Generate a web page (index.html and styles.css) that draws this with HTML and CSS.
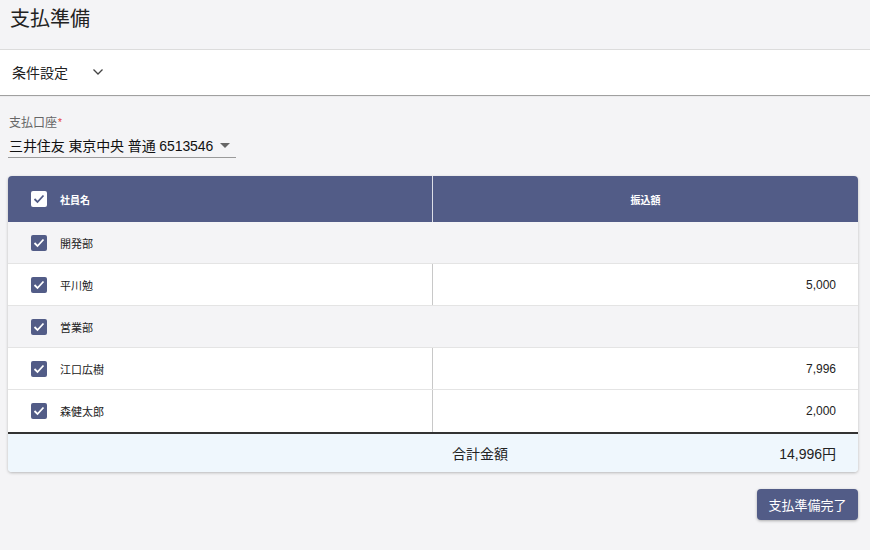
FILE: index.html
```html
<!DOCTYPE html>
<html lang="ja">
<head>
<meta charset="utf-8">
<link rel="stylesheet" href="styles.css">
</head>
<body>
<header class="page-head"><h1 class="title">支払準備</h1></header>
<section class="panel">
  <span class="panel-label">条件設定</span>
  <svg class="chevron" width="12" height="8" viewBox="0 0 12 8"><path d="M1.5 1.5 L6 6 L10.5 1.5" fill="none" stroke="#444" stroke-width="1.3"/></svg>
</section>
<main class="content">
  <div class="field">
    <label class="field-label">支払口座<span class="req">*</span></label>
    <div class="select">
      <span class="select-value">三井住友 東京中央 普通 6513546</span>
      <svg class="caret" width="10" height="5" viewBox="0 0 10 5"><path d="M0 0 L10 0 L5 5 Z" fill="#666"/></svg>
    </div>
  </div>

  <div class="card">
    <div class="row head">
      <div class="cell name"><span class="cb cb-white"><svg width="12" height="10" viewBox="0 0 12 10"><path d="M1.5 5 L4.5 8 L10.5 1.5" fill="none" stroke="#525c87" stroke-width="1.8"/></svg></span><span>社員名</span></div>
      <div class="cell amount center">振込額</div>
    </div>
    <div class="row group">
      <div class="cell name"><span class="cb"><svg width="12" height="10" viewBox="0 0 12 10"><path d="M1.5 5 L4.5 8 L10.5 1.5" fill="none" stroke="#fff" stroke-width="1.8"/></svg></span><span>開発部</span></div>
    </div>
    <div class="row item">
      <div class="cell name"><span class="cb"><svg width="12" height="10" viewBox="0 0 12 10"><path d="M1.5 5 L4.5 8 L10.5 1.5" fill="none" stroke="#fff" stroke-width="1.8"/></svg></span><span>平川勉</span></div>
      <div class="cell amount">5,000</div>
    </div>
    <div class="row group">
      <div class="cell name"><span class="cb"><svg width="12" height="10" viewBox="0 0 12 10"><path d="M1.5 5 L4.5 8 L10.5 1.5" fill="none" stroke="#fff" stroke-width="1.8"/></svg></span><span>営業部</span></div>
    </div>
    <div class="row item">
      <div class="cell name"><span class="cb"><svg width="12" height="10" viewBox="0 0 12 10"><path d="M1.5 5 L4.5 8 L10.5 1.5" fill="none" stroke="#fff" stroke-width="1.8"/></svg></span><span>江口広樹</span></div>
      <div class="cell amount">7,996</div>
    </div>
    <div class="row item last">
      <div class="cell name"><span class="cb"><svg width="12" height="10" viewBox="0 0 12 10"><path d="M1.5 5 L4.5 8 L10.5 1.5" fill="none" stroke="#fff" stroke-width="1.8"/></svg></span><span>森健太郎</span></div>
      <div class="cell amount">2,000</div>
    </div>
    <div class="row foot">
      <div class="cell name"></div>
      <div class="cell total"><span>合計金額</span><span>14,996円</span></div>
    </div>
  </div>

  <div class="actions">
    <button class="btn">支払準備完了</button>
  </div>
</main>
</body>
</html>
```

FILE: styles.css
```css
* { box-sizing: border-box; }
html, body { margin: 0; padding: 0; }
body {
  background: #f4f4f6;
  font-family: "Liberation Sans", "Noto Sans CJK JP", sans-serif;
  color: #222;
  width: 870px;
  height: 550px;
  overflow: hidden;
}
.page-head { height: 49px; padding: 6px 10px 0; }
.title { margin: 0; font-size: 20px; font-weight: 400; line-height: 26px; color: #222; }

.panel {
  height: 46px;
  background: #fff;
  border-top: 1px solid #dcdcdc;
  box-shadow: 0 1px 1px rgba(0,0,0,0.2), 0 1px 0 #c8c8c8;
  display: flex;
  align-items: center;
  padding: 0 12px 2px;
  gap: 24px;
}
.panel-label { font-size: 14px; color: #222; }
.chevron { display: block; }

.content { padding: 20px 12px 0 8px; }
.field { width: 228px; }
.field-label { display: block; font-size: 12px; color: #666; line-height: 16px; height: 16px; padding-left: 1px; }
.req { color: #e53935; font-size: 10px; vertical-align: top; margin-left: 1px; }
.select {
  height: 27px;
  display: flex;
  align-items: center;
  border-bottom: 1px solid #9a9a9a;
  padding: 2px 6px 0 1px;
  white-space: nowrap;
}
.select-value { font-size: 14px; color: #111; letter-spacing: -0.1px; }
.caret { display: block; flex: none; margin-left: auto; }

.card {
  margin-top: 18px;
  width: 850px;
  background: #fff;
  border-radius: 4px;
  box-shadow: 0 1px 3px rgba(0,0,0,0.25);
  overflow: hidden;
}
.row { display: flex; height: 42px; border-bottom: 1px solid #e4e4e4; }
.cell { display: flex; align-items: center; font-size: 11px; }
.cell.name { width: 424px; padding-left: 23px; gap: 13px; }
.cell.amount { flex: 1; justify-content: flex-end; padding-right: 22px; border-left: 1px solid #c8c8c8; font-size: 12px; }
.cell.center { justify-content: center; padding-right: 0; }

.head { height: 46px; background: #525c87; color: #fff; border-bottom: none; font-weight: 700; }
.head .cell { font-size: 10px; }
.head .cell.amount { border-left: 1px solid rgba(255,255,255,0.8); }
.group { background: #f4f4f6; }
.item { background: #fff; }
.last { border-bottom: none; }

.cb {
  width: 16px; height: 16px;
  border-radius: 2px;
  background: #525c87;
  display: flex; align-items: center; justify-content: center;
}
.cb svg { display: block; }
.cb-white { background: #fff; }

.foot { height: 40px; background: #eff7fd; border-top: 2px solid #333; border-bottom: none; }
.foot .cell.name { padding: 0; }
.cell.total { flex: 1; justify-content: space-between; padding: 0 22px 0 20px; font-size: 14px; }

.actions { display: flex; justify-content: flex-end; margin-top: 17px; width: 850px; }
.btn {
  width: 101px; height: 31px;
  background: #525c87;
  color: #fff;
  border: none;
  border-radius: 4px;
  font-family: "Liberation Sans", "Noto Sans CJK JP", sans-serif;
  font-size: 13px;
  box-shadow: 0 1px 3px rgba(0,0,0,0.3);
  padding: 0;
}
```
